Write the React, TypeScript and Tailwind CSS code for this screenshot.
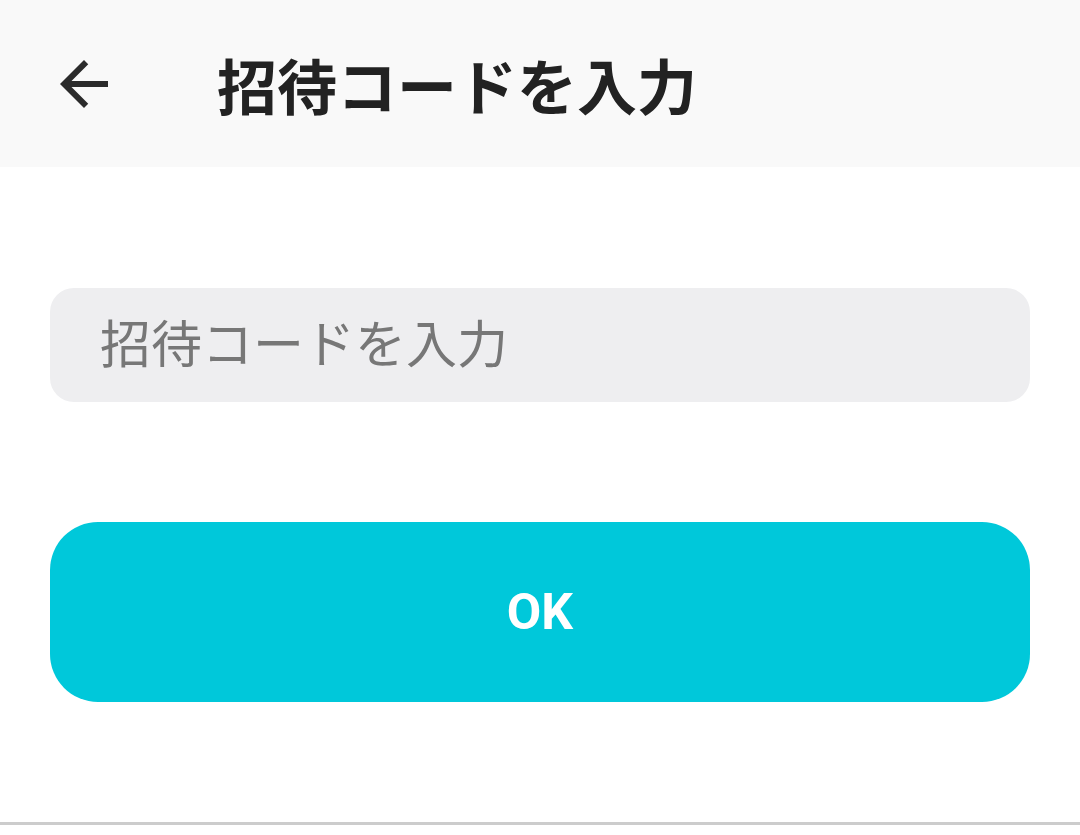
import React from 'react';

function BackArrow() {
  return (
    <svg viewBox="0 0 24 24" className="w-[72px] h-[72px] fill-[#2b2b2b]">
      <path d="M20 11H7.83l5.59-5.59L12 4l-8 8 8 8 1.41-1.41L7.83 13H20v-2z" />
    </svg>
  );
}

export default function App() {
  const [code, setCode] = React.useState('');

  return (
    <div className="w-[1080px] h-[835px] bg-white flex flex-col font-['Noto_Sans_CJK_JP','Noto_Sans',sans-serif]">
      <header className="h-[167px] bg-[#f9f9f9] flex items-center pl-[48px] shrink-0">
        <button className="flex items-center justify-center w-[72px] h-[72px]">
          <BackArrow />
        </button>
        <h1 className="ml-[97px] text-[60px] leading-none font-bold text-[#222222]">
          招待コードを入力
        </h1>
      </header>

      <main className="flex-1 flex flex-col px-[50px] pt-[121px]">
        <input
          value={code}
          onChange={(e) => setCode(e.target.value)}
          placeholder="招待コードを入力"
          className="h-[114px] w-full rounded-[24px] bg-[#eeeef0] pl-[50px] pr-[48px] pb-[8px] text-[51px] text-[#333] placeholder:text-[#777777] outline-none"
        />
        <button className="mt-[120px] h-[180px] w-full rounded-[48px] bg-[#00c8da] text-white text-[50px] font-bold font-['Roboto',sans-serif]">
          OK
        </button>
      </main>

      <div className="h-[3px] bg-[#cccccc] mb-[10px]" />
    </div>
  );
}
